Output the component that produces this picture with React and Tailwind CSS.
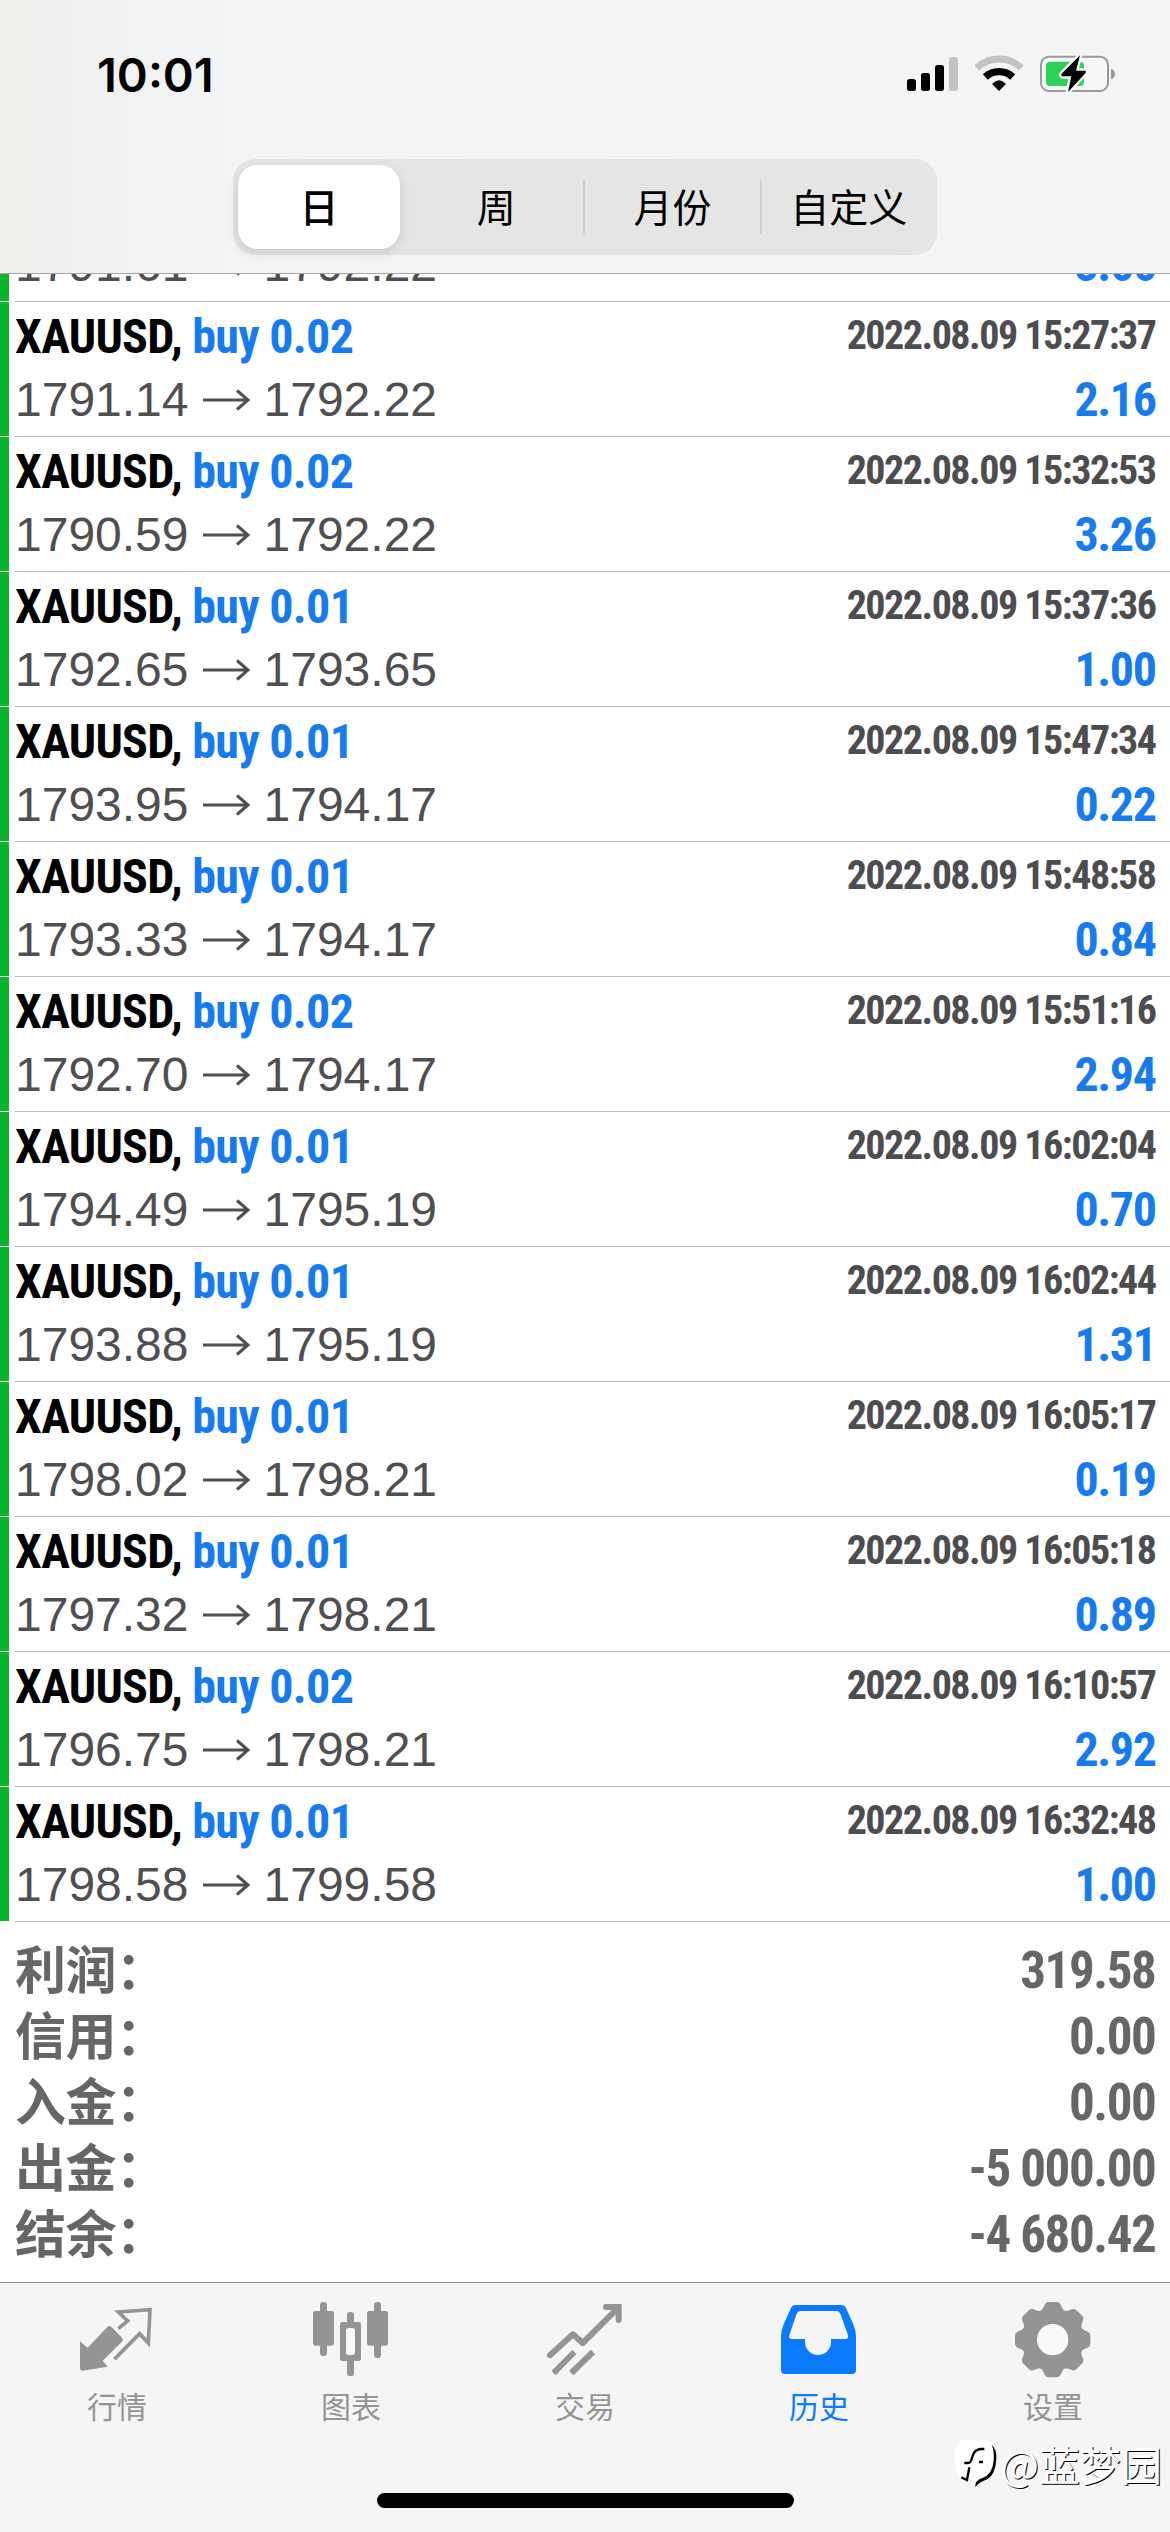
import React, { useState } from 'react';
import clsx from 'clsx';

const deals = [
  { open: '1791.61', close: '1792.22', profit: '3.66', clipped: true },
  { lots: '0.02', open: '1791.14', close: '1792.22', time: '2022.08.09 15:27:37', profit: '2.16' },
  { lots: '0.02', open: '1790.59', close: '1792.22', time: '2022.08.09 15:32:53', profit: '3.26' },
  { lots: '0.01', open: '1792.65', close: '1793.65', time: '2022.08.09 15:37:36', profit: '1.00' },
  { lots: '0.01', open: '1793.95', close: '1794.17', time: '2022.08.09 15:47:34', profit: '0.22' },
  { lots: '0.01', open: '1793.33', close: '1794.17', time: '2022.08.09 15:48:58', profit: '0.84' },
  { lots: '0.02', open: '1792.70', close: '1794.17', time: '2022.08.09 15:51:16', profit: '2.94' },
  { lots: '0.01', open: '1794.49', close: '1795.19', time: '2022.08.09 16:02:04', profit: '0.70' },
  { lots: '0.01', open: '1793.88', close: '1795.19', time: '2022.08.09 16:02:44', profit: '1.31' },
  { lots: '0.01', open: '1798.02', close: '1798.21', time: '2022.08.09 16:05:17', profit: '0.19' },
  { lots: '0.01', open: '1797.32', close: '1798.21', time: '2022.08.09 16:05:18', profit: '0.89' },
  { lots: '0.02', open: '1796.75', close: '1798.21', time: '2022.08.09 16:10:57', profit: '2.92' },
  { lots: '0.01', open: '1798.58', close: '1799.58', time: '2022.08.09 16:32:48', profit: '1.00' },
];

const summary = [
  { label: '利润：', value: '319.58' },
  { label: '信用：', value: '0.00' },
  { label: '入金：', value: '0.00' },
  { label: '出金：', value: '-5 000.00' },
  { label: '结余：', value: '-4 680.42' },
];

const periods = ['日', '周', '月份', '自定义'];

const StatusBar = () => (
  <div className="flex h-[159px] items-start justify-between pr-[55px] pl-[97px]">
    <span className="mt-[46px] font-['Inter',sans-serif] text-[47px] leading-[57px] font-semibold text-black">10:01</span>
    <div className="mt-[54px] flex gap-[17px]">
      <svg className="h-[40px] w-[51px]" viewBox="51 42 153 120">
        <rect x="51" y="117" width="27" height="36" rx="8" />
        <rect x="93" y="99" width="27" height="54" rx="8" />
        <rect x="135" y="75" width="27" height="78" rx="8" />
        <rect x="177" y="51" width="27" height="102" rx="8" fill="#c3c3c3" />
      </svg>
      <svg className="h-[40px] w-[48px]" viewBox="255 42 144 120" fill="none">
        <path d="M260 84A96 96 0 0 1 394 84" stroke="#c3c3c3" strokeWidth="21" />
        <path d="M286 111A60 60 0 0 1 368 111" stroke="#000" strokeWidth="22" />
        <path d="M327 153L306 132Q327 110 348 132Z" fill="#000" />
      </svg>
      <svg className="h-[40px] w-[75px]" viewBox="450 42 225 120">
        <rect x="453" y="50" width="201" height="103" rx="24" fill="#f7f7f7" stroke="#9a9a9a" strokeWidth="6" />
        <path d="M663 86Q675 90 675 102Q675 114 663 118Z" fill="#9a9a9a" />
        <rect x="468" y="65" width="114" height="73" rx="12" fill="#30d158" />
        <path
          d="M570 46L514 102Q512 108 518 109H544L534 156L587 99Q590 93 584 92H558Z"
          stroke="#f7f7f7"
          strokeWidth="14"
          paintOrder="stroke"
        />
      </svg>
    </div>
  </div>
);

const PeriodTabs = () => {
  const [active, setActive] = useState(0);

  return (
    <div className="mx-auto flex h-24 w-[704px] items-center rounded-[22px] bg-[#e5e5e6] pl-[5px] font-['Noto_Sans_CJK_SC',sans-serif] text-[39px] text-black">
      {periods.map((period, index) => (
        <React.Fragment key={period}>
          {index > 1 && <div className="-mx-px h-[54px] w-[2px] bg-[#d0d0d2]" />}
          <button
            onClick={() => setActive(index)}
            className={clsx(
              'h-[84px] rounded-[20px] pb-[3px] leading-[81px]',
              index === active ? 'mr-[8px] w-[162px] bg-white font-medium shadow-[0_4px_12px_rgba(0,0,0,0.12)]' : 'flex-1'
            )}
          >
            {period}
          </button>
        </React.Fragment>
      ))}
    </div>
  );
};

const DealRow = ({ deal }) => (
  <div className="flex h-[135px] shrink-0">
    <div className="h-[134px] w-[9px] bg-[#0ab52b]" />
    <div className="ml-[6px] flex flex-1 flex-col justify-end border-b border-[#bcbcbc] pr-4 pb-[10px]">
      {!deal.clipped && (
        <div className="mb-[11px] flex items-start justify-between font-['Roboto_Condensed',sans-serif] font-bold">
          <p className="text-[48px] leading-[52px] tracking-[-0.7px] text-black">
            XAUUSD, <span className="text-[#167bf0]">buy {deal.lots}</span>
          </p>
          <p className="-mr-[1.5px] text-[40px] leading-[50px] tracking-[-1.5px] text-[#4d4d50]">{deal.time}</p>
        </div>
      )}
      <div className="flex items-center justify-between text-[48px] leading-[52px]">
        <p className="flex items-center font-['Liberation_Sans',sans-serif] text-[#4f4f52]">
          {deal.open}
          <svg className="mx-[14px] h-[22px] w-[47px]" viewBox="0 0 47 22" fill="none" stroke="currentColor" strokeWidth="3">
            <path d="M0 11H45M34 1.5L45 11L34 20.5" />
          </svg>
          {deal.close}
        </p>
        <p className="-mr-[1.5px] font-['Roboto_Condensed',sans-serif] font-bold tracking-[-1.4px] text-[#167bf0]">{deal.profit}</p>
      </div>
    </div>
  </div>
);

const QuotesIcon = () => (
  <svg className="size-[78px]" viewBox="84 93 234 234" fill="currentColor">
    <path d="M90 214L113 233L172 171Q178 165 184 170L216 203Q221 209 216 215L158 272L173 290L98 302Q90 302 90 294Z" />
    <path d="M205 176L233 153L205 126L300 119L295 219L269 191L193 268" fill="none" stroke="currentColor" strokeWidth="11" />
  </svg>
);

const ChartIcon = () => (
  <svg className="size-[78px]" viewBox="786 93 234 234" fill="currentColor">
    <rect x="810" y="96" width="21" height="162" rx="10" />
    <rect x="789" y="123" width="63" height="104" rx="7" />
    <rect x="891" y="126" width="21" height="192" rx="10" />
    <rect x="870" y="156" width="63" height="117" rx="7" />
    <rect x="888" y="174" width="27" height="81" rx="9" fill="#fafafa" />
    <rect x="972" y="96" width="21" height="168" rx="10" />
    <rect x="951" y="123" width="63" height="104" rx="7" />
  </svg>
);

const TradeIcon = () => (
  <svg className="size-[78px]" viewBox="138 93 234 234" fill="none" stroke="currentColor" strokeWidth="18">
    <path d="M150 256L219 193L248 219L352 116" strokeLinecap="round" strokeLinejoin="round" />
    <path d="M318 111H356V150" strokeLinecap="round" />
    <path d="M161 309L223 246M214 309L279 246" />
    <circle cx="167" cy="303" r="9" fill="currentColor" stroke="none" />
    <circle cx="220" cy="303" r="9" fill="currentColor" stroke="none" />
  </svg>
);

const HistoryIcon = () => (
  <svg className="size-[78px]" viewBox="840 93 234 234" fill="currentColor">
    <path
      fillRule="evenodd"
      d="M886 105H1025Q1033 105 1037 112L1060 163Q1068 182 1068 198V300Q1068 312 1056 312H855Q843 312 843 300V198Q843 182 851 163L874 112Q878 105 886 105ZM902 123Q893 123 890 131L868 195Q864 207 877 207H915V216A39 39 0 0 0 993 216V207H1036Q1047 207 1044 195L1021 131Q1018 123 1010 123Z"
    />
  </svg>
);

const SettingsIcon = () => (
  <svg className="size-[78px]" viewBox="402 93 234 234" fill="currentColor">
    <circle cx="518" cy="209" r="88" />
    {[0, 45, 90, 135, 180, 225, 270, 315].map((angle) => (
      <path
        key={angle}
        d="M504 96H532Q539 97 542 104L547 115Q552 126 564 124L518 180L472 124Q484 126 489 115L494 104Q497 97 504 96Z"
        transform={`rotate(${angle} 518 209)`}
      />
    ))}
    <circle cx="518" cy="209" r="47" fill="#fafafa" />
  </svg>
);

const tabs = [
  { name: '行情', icon: QuotesIcon },
  { name: '图表', icon: ChartIcon },
  { name: '交易', icon: TradeIcon },
  { name: '历史', icon: HistoryIcon, active: true },
  { name: '设置', icon: SettingsIcon },
];

const Watermark = () => (
  <div className="absolute right-[8px] bottom-[43px] flex items-center">
    <svg className="mt-[3px] mr-[3px] h-[50px] w-[44px]" viewBox="30 45 132 150">
      <path d="M62 48H130Q158 56 158 95Q158 150 128 165Q106 172 98 188L96 178Q104 168 80 166L52 160Q36 150 36 100Q36 56 62 48Z" fill="#fff" />
      <path d="M146 62Q162 75 160 107Q156 152 134 165Q108 174 97 190Q94 170 118 162Q148 152 152 110Q154 80 146 62Z" />
      <path d="M124 75H114Q94 76 89 96L85 108Q82 117 76 117H64M79 130L72 168L55 160M108 114H120" fill="none" stroke="#000" strokeWidth="7" />
    </svg>
    <span className="font-['Noto_Sans_CJK_SC',sans-serif] text-[41px] leading-[50px] whitespace-nowrap text-white [text-shadow:1px_1px_0_#000]">
      @蓝梦园
    </span>
  </div>
);

const App = () => {
  return (
    <div className="relative flex h-[2532px] w-[1170px] flex-col overflow-hidden bg-white">
      <header className="h-[274px] shrink-0 border-b border-[#a3a3a3] bg-linear-to-r from-[#eeefeb] via-[#f3f4f6] via-20% to-[#f5f5f5]">
        <StatusBar />
        <PeriodTabs />
      </header>

      {/* scrolled to the end, so the first row is cut by the header */}
      <div className="flex h-[1648px] shrink-0 flex-col justify-end overflow-hidden">
        {deals.map((deal, index) => (
          <DealRow key={index} deal={deal} />
        ))}
      </div>

      <div className="h-[360px] shrink-0 px-4 pt-4 text-[51px] font-bold text-[#666]">
        {summary.map((item) => (
          <div key={item.label} className="flex h-[66px] items-start justify-between">
            <span className="-ml-px font-['Noto_Sans_CJK_SC',sans-serif] leading-[58px] tracking-[-0.5px]">{item.label}</span>
            <span className="-mr-[1.5px] font-['Roboto_Condensed',sans-serif] leading-[66px] tracking-[-1.4px]">{item.value}</span>
          </div>
        ))}
      </div>

      <nav className="flex flex-1 flex-col items-center justify-between border-t border-[#8e8e8e] bg-[#f5f5f5] pb-6">
        <div className="grid w-full grid-cols-5">
          {tabs.map((tab) => (
            <div
              key={tab.name}
              className={clsx('flex flex-col items-center pt-[18px]', tab.active ? 'text-[#0a7aff]' : 'text-[#949494]')}
            >
              <tab.icon />
              <span className="mt-[6px] font-['Noto_Sans_CJK_SC',sans-serif] text-[30px] leading-10">{tab.name}</span>
            </div>
          ))}
        </div>
        <div className="h-[15px] w-[417px] rounded-full bg-black" />
      </nav>

      <Watermark />
    </div>
  );
};

export default App;
